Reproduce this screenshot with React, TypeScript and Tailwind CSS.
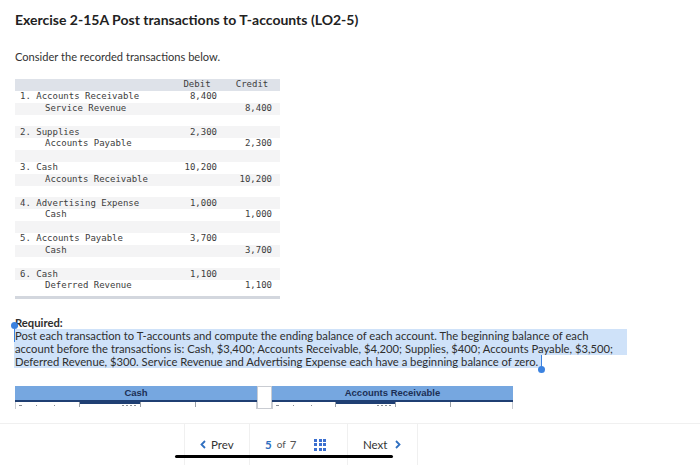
import React from "react";

const rows: { label: string; indent?: boolean; debit?: string; credit?: string }[] = [
  { label: "1. Accounts Receivable", debit: "8,400" },
  { label: "Service Revenue", indent: true, credit: "8,400" },
  { label: "" },
  { label: "2. Supplies", debit: "2,300" },
  { label: "Accounts Payable", indent: true, credit: "2,300" },
  { label: "" },
  { label: "3. Cash", debit: "10,200" },
  { label: "Accounts Receivable", indent: true, credit: "10,200" },
  { label: "" },
  { label: "4. Advertising Expense", debit: "1,000" },
  { label: "Cash", indent: true, credit: "1,000" },
  { label: "" },
  { label: "5. Accounts Payable", debit: "3,700" },
  { label: "Cash", indent: true, credit: "3,700" },
  { label: "" },
  { label: "6. Cash", debit: "1,100" },
  { label: "Deferred Revenue", indent: true, credit: "1,100" },
];

function TBand({ title, width, marks }: { title: string; width: number; marks: number[] }) {
  return (
    <div className="flex flex-col" style={{ width }}>
      <div className="h-[16px] bg-[#76a7e0] border-b-2 border-[#1f3f73] flex items-center justify-center text-[9.5px] font-bold text-[#1c2f55] [font-family:'Liberation_Sans',Arial,sans-serif]">
        {title}
      </div>
      <div className="relative h-[7px] border-l border-r border-[#c9ccd2]">
        <div className="absolute top-0 h-[2px] bg-[#1f3f73]" style={{ left: marks[0], width: marks[1] - marks[0] }} />
        {marks.map((m, i) => (
          <div key={i} className="absolute top-0 h-[5px] w-px bg-[#9aa0a8]" style={{ left: m }} />
        ))}
        <div className="absolute top-[3px] left-[3px] h-px w-[3px] bg-[#8a8f96]" />
        <div className="absolute top-[3px] left-[20px] h-px w-[1px] bg-[#8a8f96]" />
        <div className="absolute top-[3px] left-[38px] h-px w-[1px] bg-[#8a8f96]" />
        <div className="absolute top-[3px] h-px w-[14px] [background:repeating-linear-gradient(90deg,#8a8f96_0_2px,transparent_2px_4px)]" style={{ left: marks[1] - 18 }} />
      </div>
    </div>
  );
}

export default function App() {
  return (
    <div className="relative w-[700px] h-[465px] bg-white overflow-hidden [font-family:Lato,'Liberation_Sans',Arial,sans-serif] text-[#2b2b2b]">
      <div className="pl-[15px] pt-[10px]">
        <h1 className="text-[14px] leading-[20px] font-bold text-[#222]">
          Exercise 2-15A Post transactions to T-accounts (LO2-5)
        </h1>
        <p className="mt-[20px] text-[11.1px] leading-[13px] text-[#333]">Consider the recorded transactions below.</p>

        <div className="mt-[16px] w-[265px] text-[9px] text-[#3d3d3d] [font-family:'DejaVu_Sans_Mono',monospace]">
          <div className="h-[12px] bg-[#dee2e9] flex items-center">
            <div className="w-[162px]" />
            <div className="w-[40px] text-center">Debit</div>
            <div className="w-[15px]" />
            <div className="w-[40px] text-center">Credit</div>
          </div>
          {rows.map((r, i) => (
            <div key={i} className={`h-[11.83px] flex items-center ${i % 2 === 1 ? "bg-[#f4f4f5]" : "bg-white"}`}>
              <div className={`w-[162px] whitespace-pre ${r.indent ? "pl-[30px]" : "pl-[5px]"}`}>{r.label}</div>
              <div className="w-[40px] text-right">{r.debit}</div>
              <div className="w-[15px]" />
              <div className="w-[40px] text-right">{r.credit}</div>
            </div>
          ))}
          <div className="h-[4px]" />
          <div className="h-[3px] bg-[#d3d7de]" />
        </div>

        <div className="relative mt-[17px] text-[11.24px] leading-[13px] text-[#2e2e2e]">
          <div className="font-bold">Required:</div>
          <div className="w-[613px] bg-[#cfe2f9] -ml-px pl-px whitespace-nowrap">
            Post each transaction to T-accounts and compute the ending balance of each account. The beginning balance of each
          </div>
          <div className="w-[613px] bg-[#cfe2f9] -ml-px pl-px whitespace-nowrap">
            account before the transactions is: Cash, $3,400; Accounts Receivable, $4,200; Supplies, $400; Accounts Payable, $3,500;
          </div>
          <div className="w-[527px] bg-[#cfe2f9] -ml-px pl-px whitespace-nowrap">
            Deferred Revenue, $300. Service Revenue and Advertising Expense each have a beginning balance of zero.
          </div>
          <div className="absolute left-[-4px] top-[6px] w-[7px] h-[7px] rounded-full bg-[#3b82e0]" />
          <div className="absolute left-[-1px] top-[13px] w-px h-[13px] bg-[#3b82e0]" />
          <div className="absolute left-[526px] top-[39px] w-px h-[13px] bg-[#3b82e0]" />
          <div className="absolute left-[523px] top-[50px] w-[7px] h-[7px] rounded-full bg-[#3b82e0]" />
        </div>

        <div className="mt-[18px] flex items-start">
          <TBand title="Cash" width={242} marks={[63, 124, 179]} />
          <div className="w-[15px] h-[23px] border border-[#c9ccd2] bg-white" />
          <TBand title="Accounts Receivable" width={241} marks={[62, 122, 177]} />
        </div>
      </div>

      <div className="absolute left-0 right-0 top-[423px] h-[42px] border-t border-[#f0f0f0] flex text-[11.5px] text-[#333]">
        <div className="w-[185px] border-r border-[#f0f0f0]" />
        <div className="w-[65px] border-r border-[#f0f0f0] flex items-center pl-[15px] gap-[5px]">
          <svg width="6" height="9" viewBox="0 0 6 9"><path d="M5 1 L1.5 4.5 L5 8" fill="none" stroke="#2f6fc0" strokeWidth="1.8" /></svg>
          <span>Prev</span>
        </div>
        <div className="w-[98px] border-r border-[#f0f0f0] flex items-center pl-[15px]">
          <span className="text-[#2f6fc0] font-bold">5</span>
          <span className="ml-[5px] text-[10px] text-[#555]">of</span>
          <span className="ml-[4px] text-[#555]">7</span>
          <div className="ml-[18px] grid grid-cols-3 gap-[1.5px]">
            {Array.from({ length: 9 }).map((_, i) => (
              <div key={i} className="w-[3px] h-[3px] bg-[#3a6fd0]" />
            ))}
          </div>
        </div>
        <div className="w-[70px] border-r border-[#f0f0f0] flex items-center pl-[15px] gap-[8px]">
          <span>Next</span>
          <svg width="6" height="9" viewBox="0 0 6 9"><path d="M1 1 L4.5 4.5 L1 8" fill="none" stroke="#2f6fc0" strokeWidth="1.8" /></svg>
        </div>
      </div>

      <div className="absolute left-[175px] top-[455px] w-[218px] h-[3px] rounded-full bg-black" />
    </div>
  );
}
